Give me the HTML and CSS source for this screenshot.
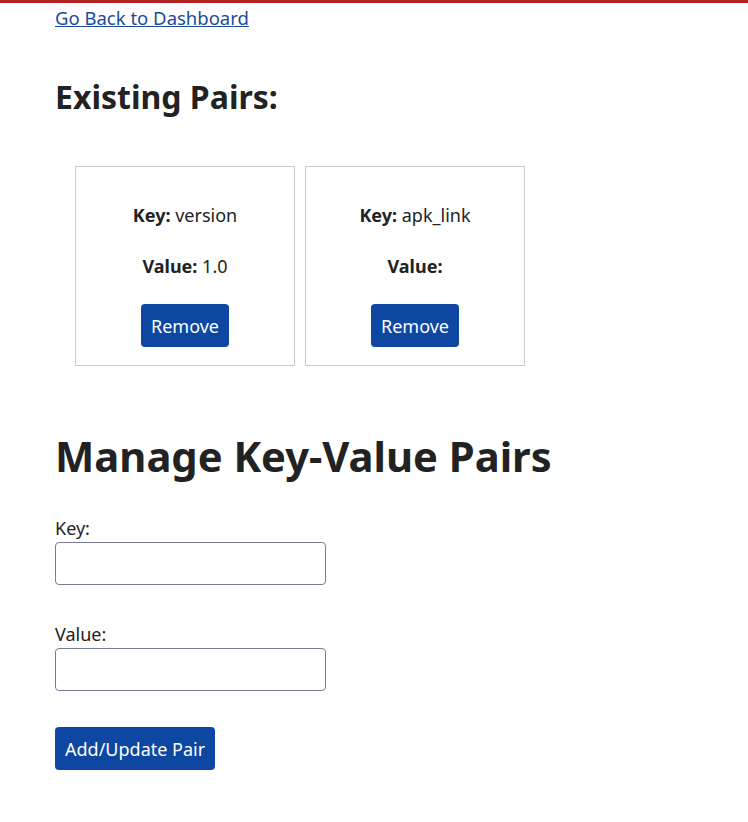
FILE: index.html
```html
<!DOCTYPE html>
<html lang="en">
<head>
<meta charset="utf-8">
<title>Manage Key-Value Pairs</title>
<link rel="stylesheet" href="styles.css">
</head>
<body>
<div class="topbar"></div>
<main class="page">
  <a class="back-link" href="#">Go Back to Dashboard</a>
  <h2 class="section-title">Existing Pairs:</h2>
  <div class="pairs">
    <div class="pair-card">
      <p><strong>Key:</strong> version</p>
      <p><strong>Value:</strong> 1.0</p>
      <button class="btn" type="button">Remove</button>
    </div>
    <div class="pair-card">
      <p><strong>Key:</strong> apk_link</p>
      <p><strong>Value:</strong> </p>
      <button class="btn" type="button">Remove</button>
    </div>
  </div>
  <h1 class="page-title">Manage Key-Value Pairs</h1>
  <form class="pair-form">
    <div class="field">
      <label for="key">Key:</label>
      <input id="key" type="text">
    </div>
    <div class="field">
      <label for="value">Value:</label>
      <input id="value" type="text">
    </div>
    <button class="btn" type="button">Add/Update Pair</button>
  </form>
</main>
</body>
</html>
```
FILE: styles.css
```css
html, body {
  margin: 0;
  padding: 0;
  background: #fff;
}
body {
  font-family: "Noto Sans", "Open Sans", sans-serif;
  font-size: 18px;
  color: #222;
}
.topbar {
  height: 3px;
  background: #b22222;
}
.page {
  padding: 2px 55px 40px;
}
.back-link {
  display: inline-block;
  font-size: 18.5px;
  color: #1a4a9c;
  text-decoration: underline;
}
.section-title {
  font-size: 32px;
  font-weight: 700;
  margin: 45px 0 0;
}
.pairs {
  display: flex;
  gap: 10px;
  padding: 48px 20px 0;
}
.pair-card {
  width: 220px;
  height: 200px;
  box-sizing: border-box;
  border: 1px solid #ccc;
  text-align: center;
  padding-top: 32px;
}
.pair-card p {
  margin: 0 0 18px;
  line-height: 33px;
}
.btn {
  font-family: inherit;
  font-size: 18px;
  color: #fff;
  background: #0d47a1;
  border: none;
  border-radius: 4px;
  height: 43px;
  padding: 0 10px;
}
.pair-card .btn {
  margin-top: 3px;
}
.page-title {
  font-size: 41.7px;
  font-weight: 700;
  margin: 61px 0 0;
}
.pair-form {
  margin-top: 31px;
}
.field {
  margin-bottom: 36px;
}
.field label {
  display: block;
  line-height: 27px;
}
.field input {
  display: block;
  width: 271px;
  height: 43px;
  box-sizing: border-box;
  border: 1px solid #7a7a98;
  border-radius: 4px;
  font-family: inherit;
  font-size: 18px;
  padding: 0 8px;
}
```
